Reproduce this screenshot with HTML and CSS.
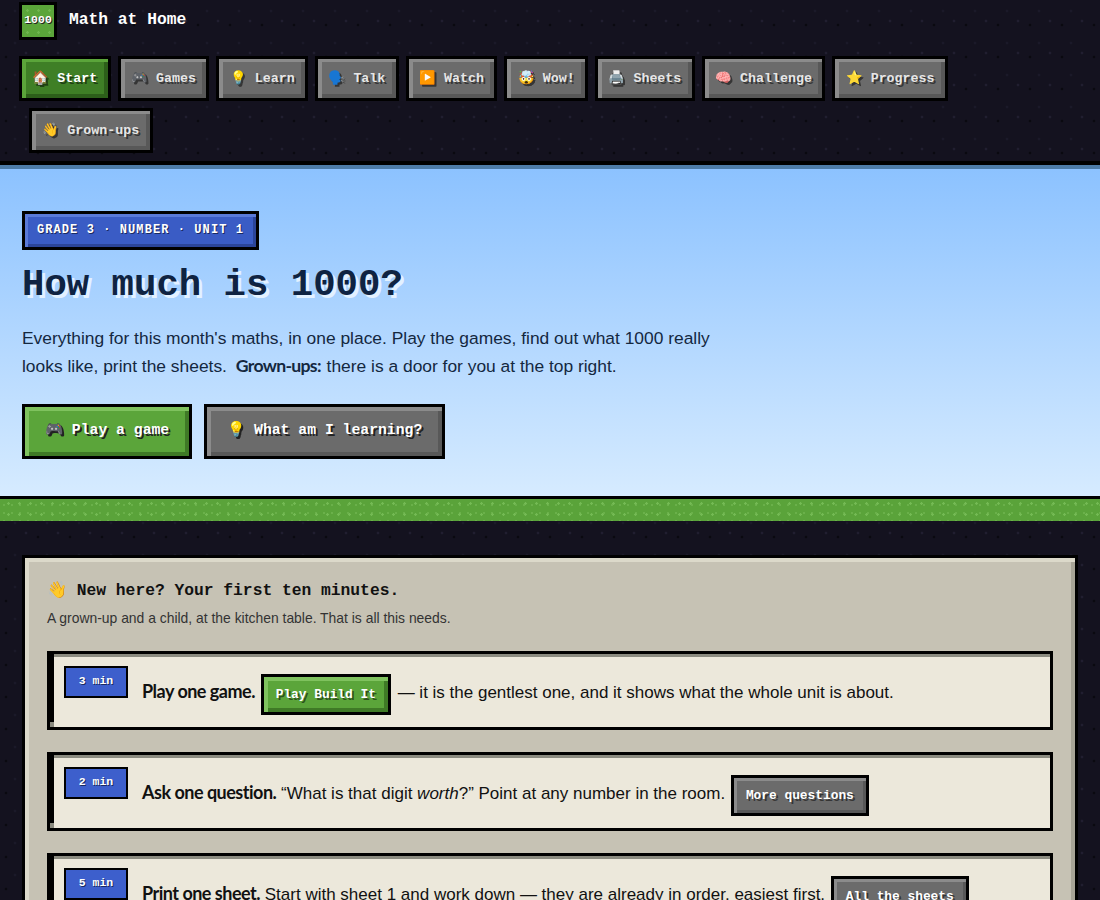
FILE: index.html
```html
<!DOCTYPE html>
<html lang="en">
<head>
    <meta charset="UTF-8">
    <meta name="viewport" content="width=device-width, initial-scale=1.0">
    <title>Math at Home</title>
    <link rel="stylesheet" href="styles.css">
</head>
<body>
    <header class="site-header">
        <div class="brand">
            <span class="brand-block">1000</span>
            <span class="brand-name">Math at Home</span>
        </div>
        <nav class="nav">
            <a class="nav-btn active">🏠 Start</a>
            <a class="nav-btn">🎮 Games</a>
            <a class="nav-btn">💡 Learn</a>
            <a class="nav-btn">🗣️ Talk</a>
            <a class="nav-btn">▶️ Watch</a>
            <a class="nav-btn">🤯 Wow!</a>
            <a class="nav-btn">🖨️ Sheets</a>
            <a class="nav-btn">🧠 Challenge</a>
            <a class="nav-btn">⭐ Progress</a>
            <a class="nav-btn door">👋 Grown-ups</a>
        </nav>
    </header>

    <section class="hero">
        <span class="hero-tag">GRADE 3 · NUMBER · UNIT 1</span>
        <h1>How much is 1000?</h1>
        <p class="lead">Everything for this month's maths, in one place. Play the games, find out what 1000 really looks like, print the sheets. <strong>Grown-ups:</strong> there is a door for you at the top right.</p>
        <div class="hero-actions">
            <a class="big-btn green">🎮 Play a game</a>
            <a class="big-btn">💡 What am I learning?</a>
        </div>
    </section>

    <div class="grass"></div>

    <main class="main">
        <section class="panel">
            <h2>👋 New here? Your first ten minutes.</h2>
            <p class="panel-sub">A grown-up and a child, at the kitchen table. That is all this needs.</p>

            <div class="step">
                <span class="mins">3 min</span>
                <p><strong>Play one game.</strong> <a class="small-btn green">Play Build It</a> — it is the gentlest one, and it shows what the whole unit is about.</p>
            </div>
            <div class="step">
                <span class="mins">2 min</span>
                <p><strong>Ask one question.</strong> “What is that digit <em>worth</em>?” Point at any number in the room. <a class="small-btn">More questions</a></p>
            </div>
            <div class="step">
                <span class="mins">5 min</span>
                <p><strong>Print one sheet.</strong> Start with sheet 1 and work down — they are already in order, easiest first. <a class="small-btn">All the sheets</a></p>
            </div>
        </section>
    </main>
</body>
</html>
```

FILE: styles.css
```css
* { box-sizing: border-box; }

html, body { height: 900px; overflow: hidden; }

body {
    margin: 0;
    background-color: #14121f;
    background-image:
        radial-gradient(#0a0910 1.5px, transparent 1.6px),
        radial-gradient(#211e30 1.5px, transparent 1.6px),
        radial-gradient(#1b1929 1.5px, transparent 1.6px);
    background-size: 32px 32px;
    background-position: -10px 9px, 10px 5px, -1px -5px;
    font-family: "Liberation Sans", Arial, sans-serif;
    color: #111;
}

strong {
    font-family: Lato, "Liberation Sans", sans-serif;
}

.site-header {
    padding: 0 20px 8px;
    border-bottom: 4px solid #000;
}

.brand {
    display: flex;
    align-items: center;
    gap: 12px;
    height: 40px;
    margin: 0 0 16px -1px;
}

.brand-block {
    width: 38px;
    height: 38px;
    margin-top: 1px;
    padding-bottom: 2px;
    border: 3px solid #000;
    background-color: #5ba53a;
    background-image: radial-gradient(#6fb54f 1px, transparent 1.5px);
    background-size: 11px 11px;
    display: flex;
    align-items: center;
    justify-content: center;
    font: bold 11.5px "Liberation Mono", monospace;
    color: #fff;
    text-shadow: 1px 1px 0 #222;
}

.brand-name {
    padding-bottom: 2px;
    font: bold 16.3px "Liberation Mono", monospace;
    color: #fff;
}

.nav {
    display: flex;
    flex-wrap: wrap;
    gap: 7px;
    margin-left: -1px;
}

.nav-btn {
    display: block;
    height: 45px;
    padding: 11px 10.4px;
    border: 3px solid #000;
    background: #6b6b6b;
    box-shadow: inset 4px 3px 0 #8b8b8b, inset -4px -4px 0 #585858;
    font: bold 13.3px/17px "Liberation Mono", monospace;
    color: #e6e6e6;
    text-shadow: 2px 2px 0 rgba(0, 0, 0, .5);
    white-space: nowrap;
}

.nav-btn.active {
    background: #3f7f26;
    box-shadow: inset 4px 3px 0 #5ba53a, inset -4px -4px 0 #2d5f1a;
    color: #fff;
}

.nav-btn.door { margin-left: 10px; }

.hero {
    height: 331px;
    padding: 42px 22px 0;
    border-top: 4px solid #4d7ca8;
    background: linear-gradient(#8cc2ff, #d6ebff);
}

.hero-tag {
    display: inline-block;
    height: 39px;
    padding: 10px 12px;
    border: 3px solid #000;
    background: #3a5cc5;
    box-shadow: inset 3px 3px 0 #5a7ad8, inset -3px -3px 0 #2b459a;
    font: bold 12px/13px "Liberation Mono", monospace;
    letter-spacing: 1.08px;
    color: #fff;
    text-shadow: 1px 1px 0 #1a2a60;
}

h1 {
    margin: 14px 0 18px;
    font: bold 37.33px/42px "Liberation Mono", monospace;
    color: #0f2342;
    text-shadow: 3px 3px 0 #e3f1ff;
}

.lead {
    width: 720px;
    margin: 0 0 24px;
    font-size: 17.4px;
    line-height: 28px;
    color: #14283f;
}

.lead strong {
    margin: 0 1px 0 4px;
    font-size: 17.67px;
    letter-spacing: -0.7px;
}

.hero-actions { display: flex; gap: 12px; }

.big-btn {
    display: block;
    height: 55px;
    padding: 13px 20px;
    border: 3px solid #000;
    background: #6b6b6b;
    box-shadow: inset 4px 4px 0 #8b8b8b, inset -4px -4px 0 #585858;
    font: bold 14.75px/20px "Liberation Mono", monospace;
    color: #fff;
    text-shadow: 2px 2px 0 #222;
}

.big-btn.green, .small-btn.green {
    background: #5ba53a;
    box-shadow: inset 4px 4px 0 #7fc25e, inset -4px -4px 0 #3f7a26;
}

.grass {
    height: 25px;
    border-top: 3px solid #000;
    background-color: #5aa33a;
    background-image:
        radial-gradient(#74ba54 1px, transparent 1.5px),
        radial-gradient(#6ab04a 1px, transparent 1.5px);
    background-size: 11px 11px, 8px 8px;
    background-position: 3px -1px, 0 10px;
}

.main { padding: 34px 22px 0; }

.panel {
    padding: 21px 22px 22px;
    border: 3px solid #000;
    background: #c6c2b4;
    box-shadow: inset 4px 4px 0 #dcd9ca, inset -4px -4px 0 #a8a597;
}

h2 {
    margin: 0 0 5px;
    font: bold 16.3px/24px "Liberation Mono", monospace;
    color: #111;
}

.panel-sub {
    margin: 0 0 23px;
    font-size: 13.9px;
    line-height: 20px;
    color: #333;
}

.step {
    position: relative;
    display: flex;
    gap: 14px;
    height: 79px;
    margin-bottom: 22px;
    padding: 12px 14px;
    border: 3px solid #000;
    background: #ece8db;
    box-shadow: inset 4px 3px 0 #8b8b80;
}

/* dark bar down the left edge, stops short of the bottom corner */
.step::before {
    content: "";
    position: absolute;
    left: 0;
    top: 0;
    width: 4px;
    bottom: 5px;
    background: #000;
}

.mins {
    flex: none;
    width: 64px;
    height: 32px;
    border: 2px solid #000;
    background: #3d5fcc;
    font: bold 11.5px/25px "Liberation Mono", monospace;
    color: #fff;
    text-align: center;
    text-shadow: 1px 1px 0 #1a2a60;
}

.step p {
    margin: 6px 0 0;
    font-size: 17px;
    line-height: 26px;
}

.step strong {
    font-size: 18px;
    letter-spacing: -0.5px;
}

.small-btn {
    display: inline-block;
    height: 41px;
    padding: 9px 12px;
    margin: 2px 2px 0 1px;
    border: 3px solid #000;
    background: #6b6b6b;
    box-shadow: inset 3px 3px 0 #8b8b8b, inset -3px -3px 0 #585858;
    font: bold 12.85px/17px "Liberation Mono", monospace;
    color: #fff;
    text-shadow: 2px 2px 0 rgba(0, 0, 0, .5);
    vertical-align: middle;
}
```
